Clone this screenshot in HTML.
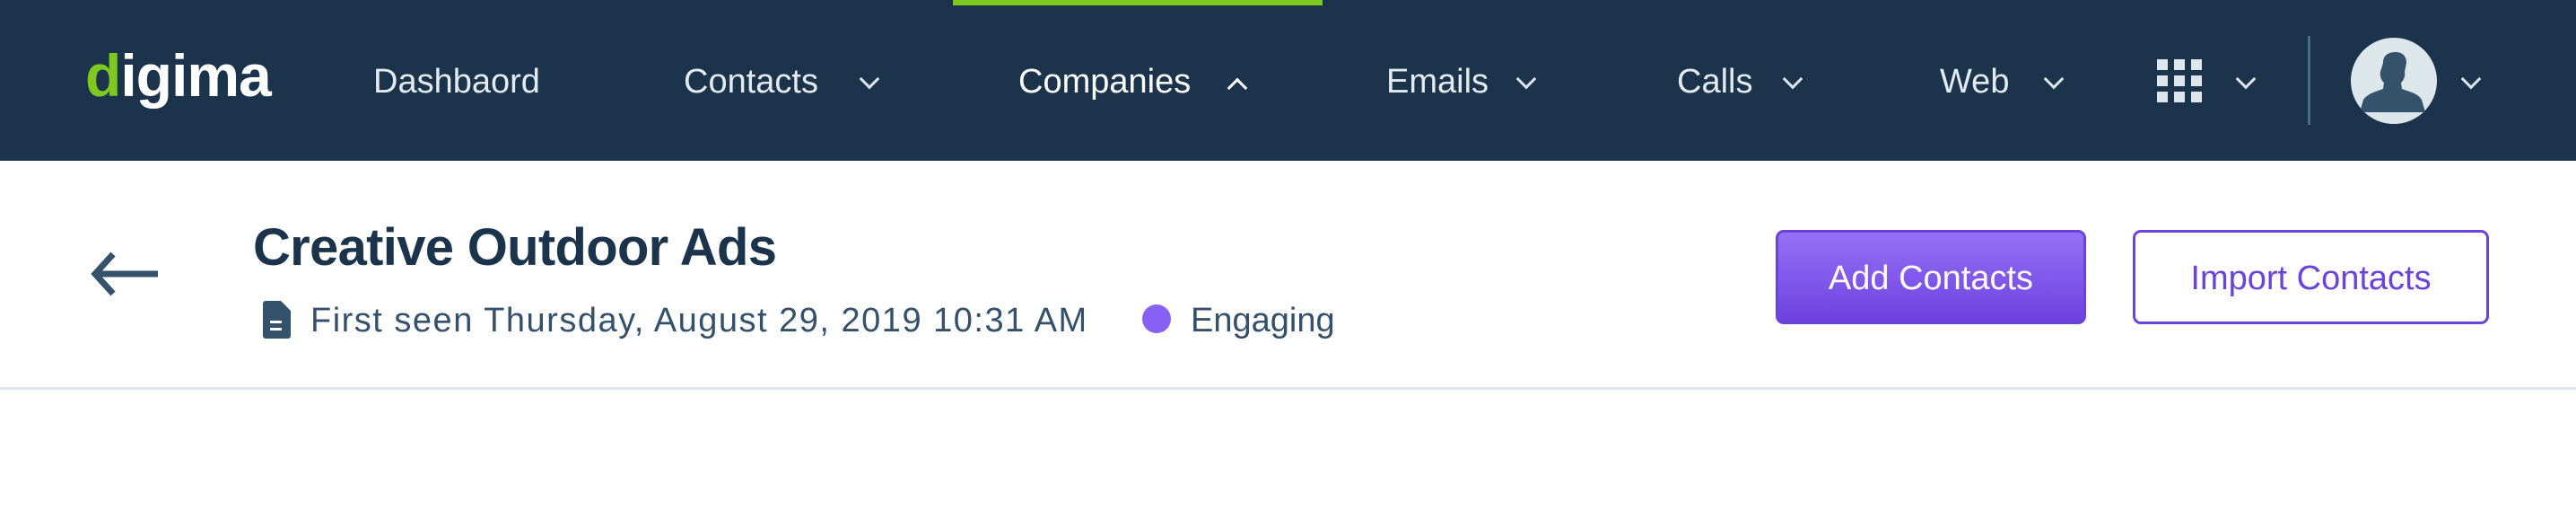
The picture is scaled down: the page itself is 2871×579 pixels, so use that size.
<!DOCTYPE html>
<html><head><meta charset="utf-8"><style>
*{margin:0;padding:0;box-sizing:border-box}
body{width:2871px;height:579px;background:#fff;font-family:"Liberation Sans",sans-serif;position:relative;overflow:hidden}
.nav{position:absolute;left:0;top:0;width:2871px;height:179px;background:#1b344b}
.a{position:absolute;white-space:nowrap}
.ni{color:#e3ebf0;font-size:38px;top:70px}
.chev{position:absolute;width:16px;height:16px;border-right:3px solid #dde6ec;border-bottom:3px solid #dde6ec;transform:rotate(45deg)}
.up{transform:rotate(225deg)}
.btn{position:absolute;top:256px;height:105px;border-radius:9px;font-size:38px;display:flex;align-items:center;justify-content:center;padding-top:4px}
</style></head><body>
<div class="nav"></div>
<div class="a" style="left:1062px;top:0;width:412px;height:6px;background:#7ec820"></div>
<div class="a" style="left:95px;top:46px;font-size:66px;font-weight:bold;color:#fff;letter-spacing:-1px"><span style="color:#7ec820">d</span>igima</div>
<div class="a ni" style="left:416px">Dashbaord</div>
<div class="a ni" style="left:762px">Contacts</div><div class="chev" style="left:961px;top:80px"></div>
<div class="a ni" style="left:1135px;color:#fff">Companies</div><div class="chev up" style="left:1371px;top:90px;border-color:#fff"></div>
<div class="a ni" style="left:1545px">Emails</div><div class="chev" style="left:1693px;top:80px"></div>
<div class="a ni" style="left:1869px">Calls</div><div class="chev" style="left:1990px;top:80px"></div>
<div class="a ni" style="left:2162px">Web</div><div class="chev" style="left:2281px;top:80px"></div>
<svg class="a" style="left:2404px;top:66px" width="50" height="48" viewBox="0 0 50 48" fill="#dde6ec">
<rect x="0" y="0" width="12" height="12"/><rect x="19" y="0" width="12" height="12"/><rect x="38" y="0" width="12" height="12"/>
<rect x="0" y="18" width="12" height="12"/><rect x="19" y="18" width="12" height="12"/><rect x="38" y="18" width="12" height="12"/>
<rect x="0" y="36" width="12" height="12"/><rect x="19" y="36" width="12" height="12"/><rect x="38" y="36" width="12" height="12"/></svg>
<div class="chev" style="left:2495px;top:80px"></div>
<div class="a" style="left:2572px;top:40px;width:3px;height:99px;background:#4c6a80"></div>
<svg class="a" style="left:2620px;top:42px" width="96" height="96" viewBox="0 0 96 96">
<circle cx="48" cy="48" r="48" fill="#dde6eb"/>
<clipPath id="c"><circle cx="48" cy="48" r="48"/></clipPath>
<g clip-path="url(#c)" fill="#34526a"><path d="M36 28c0-10 8-12 14-12 8 0 12 5 12 12l-2 10c1 4-1 10-4 12l1 7c8 3 18 5 22 12l4 14H10l4-14c5-7 14-9 22-12l1-7c-3-2-5-8-4-12z"/></g></svg>
<div class="chev" style="left:2746px;top:80px"></div>
<svg class="a" style="left:100px;top:280px" width="78" height="50" viewBox="0 0 78 50"><path d="M76 25H8M26 3L6 25l20 22" stroke="#34526a" stroke-width="7" fill="none"/></svg>
<div class="a" style="left:282px;top:242px;font-size:58px;font-weight:bold;color:#1b344b;letter-spacing:-0.7px">Creative Outdoor Ads</div>
<svg class="a" style="left:293px;top:335px" width="31" height="42" viewBox="0 0 31 42"><path d="M3 0h17l11 11v28a3 3 0 0 1-3 3H3a3 3 0 0 1-3-3V3a3 3 0 0 1 3-3z" fill="#34526a"/><rect x="8" y="22" width="13" height="3" fill="#fff"/><rect x="8" y="30" width="13" height="3" fill="#fff"/></svg>
<div class="a" style="left:346px;top:336px;font-size:38px;color:#34506a;letter-spacing:1.5px">First seen Thursday, August 29, 2019 10:31 AM</div>
<div class="a" style="left:1273px;top:339px;width:32px;height:32px;border-radius:50%;background:#8761f3"></div>
<div class="a" style="left:1327px;top:336px;font-size:38px;color:#34506a">Engaging</div>
<div class="btn" style="left:1979px;width:346px;background:linear-gradient(#9670f6,#6d42e0);border:3px solid #6a44d8;color:#fff">Add Contacts</div>
<div class="btn" style="left:2377px;width:397px;border:3px solid #6a44d8;color:#6a44d8;background:#fff">Import Contacts</div>
<div class="a" style="left:0;top:431px;width:2871px;height:3px;background:#dde7ed"></div>
</body></html>
